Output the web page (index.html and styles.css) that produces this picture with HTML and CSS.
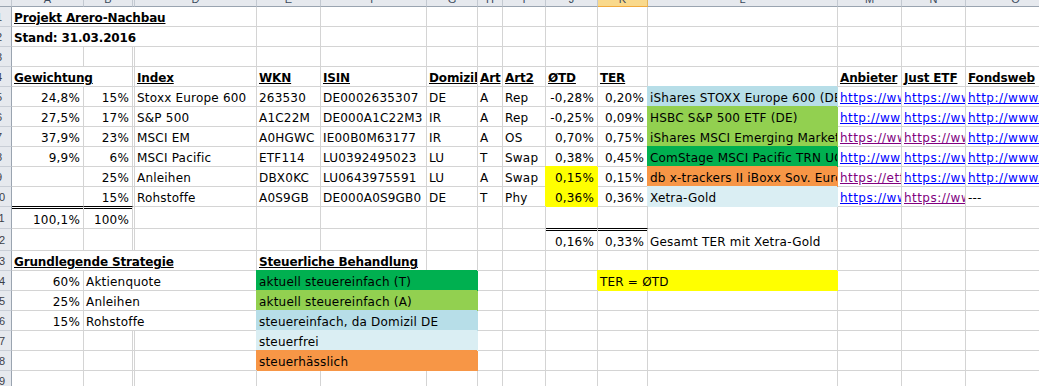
FILE: index.html
```html
<!DOCTYPE html>
<html lang="de">
<head>
<meta charset="utf-8">
<title>Projekt Arero-Nachbau</title>
<link rel="stylesheet" href="styles.css">
</head>
<body>
<div class="sheet">
  <div class="ch"></div><div class="ch">A</div><div class="ch">B</div><div class="ch x"></div><div class="ch">D</div><div class="ch">E</div><div class="ch">F</div><div class="ch">G</div><div class="ch">H</div><div class="ch">I</div><div class="ch">J</div><div class="ch sel">K</div><div class="ch">L</div><div class="ch">M</div><div class="ch">N</div><div class="ch">O</div>

  <div class="rh"><span>1</span></div><div class="c s4 b"><span class="u">Projekt Arero-Nachbau</span></div><div class="c"></div><div class="c"></div><div class="c"></div><div class="c"></div><div class="c"></div><div class="c"></div><div class="c"></div><div class="c"></div><div class="c"></div><div class="c"></div><div class="c"></div>

  <div class="rh"><span>2</span></div><div class="c s4 b">Stand: 31.03.2016</div><div class="c"></div><div class="c"></div><div class="c"></div><div class="c"></div><div class="c"></div><div class="c"></div><div class="c"></div><div class="c"></div><div class="c"></div><div class="c"></div><div class="c"></div>

  <div class="rh"><span>3</span></div><div class="c"></div><div class="c"></div><div class="c x"></div><div class="c"></div><div class="c"></div><div class="c"></div><div class="c"></div><div class="c"></div><div class="c"></div><div class="c"></div><div class="c"></div><div class="c"></div><div class="c"></div><div class="c"></div><div class="c"></div>

  <div class="rh"><span>4</span></div><div class="c s2 b"><span class="u">Gewichtung</span></div><div class="c x"></div><div class="c b"><span class="u">Index</span></div><div class="c b"><span class="u">WKN</span></div><div class="c b"><span class="u">ISIN</span></div><div class="c b"><span class="u">Domizil</span></div><div class="c b"><span class="u">Art</span></div><div class="c b"><span class="u">Art2</span></div><div class="c b"><span class="u">ØTD</span></div><div class="c b"><span class="u">TER</span></div><div class="c"></div><div class="c b"><span class="u">Anbieter</span></div><div class="c b"><span class="u">Just ETF</span></div><div class="c b"><span class="u">Fondsweb</span></div>

  <div class="rh"><span>5</span></div><div class="c r">24,8%</div><div class="c r">15%</div><div class="c x"></div><div class="c">Stoxx Europe 600</div><div class="c">263530</div><div class="c">DE0002635307</div><div class="c">DE</div><div class="c">A</div><div class="c">Rep</div><div class="c r">-0,28%</div><div class="c r">0,20%</div><div class="c f-blue">iShares STOXX Europe 600 (DE)</div><div class="c"><a href="#">https://www.ishares.com</a></div><div class="c"><a href="#">https://www.justetf.com</a></div><div class="c"><a href="#">http://www.fondsweb.de</a></div>

  <div class="rh"><span>6</span></div><div class="c r">27,5%</div><div class="c r">17%</div><div class="c x"></div><div class="c">S&amp;P 500</div><div class="c">A1C22M</div><div class="c">DE000A1C22M3</div><div class="c">IR</div><div class="c">A</div><div class="c">Rep</div><div class="c r">-0,25%</div><div class="c r">0,09%</div><div class="c f-green">HSBC S&amp;P 500 ETF (DE)</div><div class="c"><a href="#">http://www.etf.hsbc.com</a></div><div class="c"><a href="#">https://www.justetf.com</a></div><div class="c"><a href="#">http://www.fondsweb.de</a></div>

  <div class="rh"><span>7</span></div><div class="c r">37,9%</div><div class="c r">23%</div><div class="c x"></div><div class="c">MSCI EM</div><div class="c">A0HGWC</div><div class="c">IE00B0M63177</div><div class="c">IR</div><div class="c">A</div><div class="c">OS</div><div class="c r">0,70%</div><div class="c r">0,75%</div><div class="c f-green">iShares MSCI Emerging Markets UCITS ETF</div><div class="c"><a class="v" href="#">https://www.ishares.com</a></div><div class="c"><a class="v" href="#">https://www.justetf.com</a></div><div class="c"><a href="#">http://www.fondsweb.de</a></div>

  <div class="rh"><span>8</span></div><div class="c r">9,9%</div><div class="c r">6%</div><div class="c x"></div><div class="c">MSCI Pacific</div><div class="c">ETF114</div><div class="c">LU0392495023</div><div class="c">LU</div><div class="c">T</div><div class="c">Swap</div><div class="c r">0,38%</div><div class="c r">0,45%</div><div class="c f-dkgreen">ComStage MSCI Pacific TRN UCITS ETF</div><div class="c"><a href="#">http://www.comstage.de</a></div><div class="c"><a href="#">https://www.justetf.com</a></div><div class="c"><a href="#">http://www.fondsweb.de</a></div>

  <div class="rh"><span>9</span></div><div class="c"></div><div class="c r">25%</div><div class="c x"></div><div class="c">Anleihen</div><div class="c">DBX0KC</div><div class="c">LU0643975591</div><div class="c">LU</div><div class="c">A</div><div class="c">Swap</div><div class="c r f-yellow">0,15%</div><div class="c r">0,15%</div><div class="c f-orange">db x-trackers II iBoxx Sov. Eurozone</div><div class="c"><a class="v" href="#">https://etf.deutscheam.com</a></div><div class="c"><a href="#">https://www.justetf.com</a></div><div class="c"><a href="#">http://www.fondsweb.de</a></div>

  <div class="rh"><span>10</span></div><div class="c dbl-b"></div><div class="c r dbl-b">15%</div><div class="c x"></div><div class="c">Rohstoffe</div><div class="c">A0S9GB</div><div class="c">DE000A0S9GB0</div><div class="c">DE</div><div class="c">T</div><div class="c">Phy</div><div class="c r f-yellow">0,36%</div><div class="c r">0,36%</div><div class="c f-pale">Xetra-Gold</div><div class="c"><a href="#">https://www.xetra-gold.com</a></div><div class="c"><a class="v" href="#">https://www.justetf.com</a></div><div class="c">---</div>

  <div class="rh"><span>11</span></div><div class="c r dbl-t">100,1%</div><div class="c r dbl-t">100%</div><div class="c x"></div><div class="c"></div><div class="c"></div><div class="c"></div><div class="c"></div><div class="c"></div><div class="c"></div><div class="c dbl-b"></div><div class="c dbl-b"></div><div class="c"></div><div class="c"></div><div class="c"></div><div class="c"></div>

  <div class="rh"><span>12</span></div><div class="c"></div><div class="c"></div><div class="c x"></div><div class="c"></div><div class="c"></div><div class="c"></div><div class="c"></div><div class="c"></div><div class="c"></div><div class="c r dbl-t">0,16%</div><div class="c r dbl-t">0,33%</div><div class="c">Gesamt TER mit Xetra-Gold</div><div class="c"></div><div class="c"></div><div class="c"></div>

  <div class="rh"><span>13</span></div><div class="c s4 b"><span class="u">Grundlegende Strategie</span></div><div class="c s2 b"><span class="u">Steuerliche Behandlung</span></div><div class="c"></div><div class="c"></div><div class="c"></div><div class="c"></div><div class="c"></div><div class="c"></div><div class="c"></div><div class="c"></div><div class="c"></div>

  <div class="rh"><span>14</span></div><div class="c r">60%</div><div class="c s3">Aktienquote</div><div class="c s3 f-dkgreen">aktuell steuereinfach (T)</div><div class="c"></div><div class="c"></div><div class="c"></div><div class="c s2 f-yellow">TER = ØTD</div><div class="c"></div><div class="c"></div><div class="c"></div>

  <div class="rh"><span>15</span></div><div class="c r">25%</div><div class="c s3">Anleihen</div><div class="c s3 f-green">aktuell steuereinfach (A)</div><div class="c"></div><div class="c"></div><div class="c"></div><div class="c"></div><div class="c"></div><div class="c"></div><div class="c"></div><div class="c"></div>

  <div class="rh"><span>16</span></div><div class="c r">15%</div><div class="c s3">Rohstoffe</div><div class="c s3 f-blue">steuereinfach, da Domizil DE</div><div class="c"></div><div class="c"></div><div class="c"></div><div class="c"></div><div class="c"></div><div class="c"></div><div class="c"></div><div class="c"></div>

  <div class="rh"><span>17</span></div><div class="c"></div><div class="c"></div><div class="c x"></div><div class="c"></div><div class="c s3 f-pale">steuerfrei</div><div class="c"></div><div class="c"></div><div class="c"></div><div class="c"></div><div class="c"></div><div class="c"></div><div class="c"></div><div class="c"></div>

  <div class="rh"><span>18</span></div><div class="c"></div><div class="c"></div><div class="c x"></div><div class="c"></div><div class="c s3 f-orange">steuerhässlich</div><div class="c"></div><div class="c"></div><div class="c"></div><div class="c"></div><div class="c"></div><div class="c"></div><div class="c"></div><div class="c"></div>

  <div class="rh"><span>19</span></div><div class="c"></div><div class="c"></div><div class="c x"></div><div class="c"></div><div class="c"></div><div class="c"></div><div class="c"></div><div class="c"></div><div class="c"></div><div class="c"></div><div class="c"></div><div class="c"></div><div class="c"></div><div class="c"></div><div class="c"></div>
</div>
</body>
</html>
```

FILE: styles.css
```css
html, body {
  margin: 0;
  padding: 0;
  background: #fff;
  overflow: hidden;
}

.sheet {
  display: grid;
  width: max-content;
  grid-template-columns: 12px 72px 49px 2px 122px 64px 106px 51px 25px 43px 52px 50px 190px 64px 64px 100px;
  grid-template-rows: 7px repeat(10, 20px) 22px 22px repeat(7, 20px);
  font-family: "DejaVu Sans", Verdana, sans-serif;
  font-size: 12px;
  color: #000;
}

/* ordinary cells */
.c {
  box-sizing: border-box;
  min-width: 0;
  display: flex;
  align-items: flex-end;
  padding: 0 3px 0 2px;
  line-height: 16px;
  letter-spacing: 0.2px;
  white-space: nowrap;
  overflow: hidden;
  border-right: 1px solid #d4d4d4;
  border-bottom: 1px solid #d4d4d4;
}

.c.x { padding: 0; }
.r { justify-content: flex-end; }
.b { font-weight: bold; letter-spacing: -0.15px; }
.u { text-decoration: underline; }

.s2 { grid-column: span 2; }
.s3 { grid-column: span 3; }
.s4 { grid-column: span 4; }

a { color: #0000ff; text-decoration: underline; flex-shrink: 0; letter-spacing: 0.45px; }
a.v { color: #800080; }

/* fills cover their surrounding grid lines, as in the spreadsheet */
.f-blue    { background: #b7dee8; border-color: #b7dee8; box-shadow: -1px -1px 0 0 #b7dee8; }
.f-pale    { background: #daeef3; border-color: #daeef3; box-shadow: -1px -1px 0 0 #daeef3; }
.f-green   { background: #92d050; border-color: #92d050; box-shadow: -1px -1px 0 0 #92d050; }
.f-dkgreen { background: #00b050; border-color: #00b050; box-shadow: -1px -1px 0 0 #00b050; }
.f-orange  { background: #f79646; border-color: #f79646; box-shadow: -1px -1px 0 0 #f79646; }
.f-yellow  { background: #ffff00; border-color: #ffff00; box-shadow: -1px -1px 0 0 #ffff00; }

/* double border (sum lines) */
.dbl-b { border-bottom-color: #000; }
.dbl-t { box-shadow: inset 0 1px 0 #fff, inset 0 2px 0 #000; }

/* column headers */
.ch {
  box-sizing: border-box;
  display: flex;
  justify-content: center;
  align-items: flex-end;
  overflow: hidden;
  font-family: "Liberation Sans", Arial, sans-serif;
  font-size: 11px;
  line-height: 14px;
  color: #3b4a5c;
  background: #e6e9ee;
  border-right: 1px solid #c3c9d1;
  border-bottom: 1px solid #9aa4b0;
}
.ch.sel {
  background: #f9d98c;
  border-bottom-color: #f0a93c;
  border-right-color: #e3b45a;
}

/* row headers */
.rh {
  box-sizing: border-box;
  display: flex;
  align-items: center;
  overflow: hidden;
  font-family: "Liberation Sans", Arial, sans-serif;
  font-size: 11px;
  color: #3b4048;
  background: #e6e9ee;
  border-right: 1px solid #9aa4b0;
  border-bottom: 1px solid #c9ced6;
}
.rh span {
  flex: 0 0 30px;
  margin-left: -16px;
  text-align: center;
}
```
